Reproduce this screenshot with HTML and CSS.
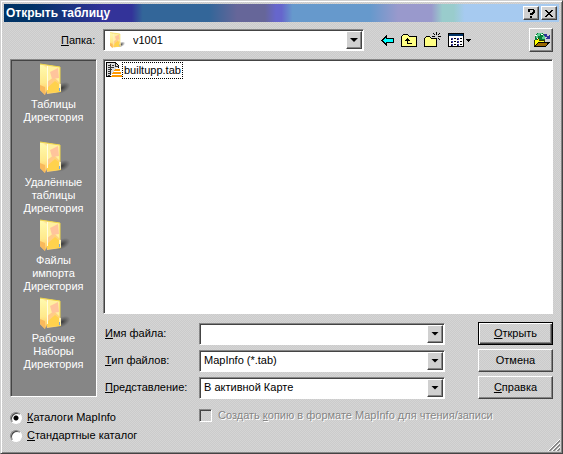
FILE: index.html
```html
<!DOCTYPE html>
<html lang="ru">
<head>
<meta charset="utf-8">
<title>Открыть таблицу</title>
<link rel="stylesheet" href="styles.css">
</head>
<body>
<svg class="defs" aria-hidden="true">
  <defs>
    <linearGradient id="paper" x1="0" x2="1" y1="0" y2="1">
      <stop offset="0" stop-color="#fff3a6"/><stop offset="0.5" stop-color="#ffc98c"/><stop offset="1" stop-color="#ffe066"/>
    </linearGradient>
    <linearGradient id="flap" x1="0" x2="0" y1="0" y2="1">
      <stop offset="0" stop-color="#fffbb0"/><stop offset="0.6" stop-color="#ffe98c"/><stop offset="1" stop-color="#ffbd5c"/>
    </linearGradient>
    <radialGradient id="shade"><stop offset="0" stop-color="#333" stop-opacity=".9"/><stop offset="1" stop-color="#444" stop-opacity="0"/></radialGradient>
    <symbol id="folder" viewBox="0 0 32 32">
      <ellipse cx="24" cy="25" rx="9" ry="5" transform="rotate(-28 24 25)" fill="url(#shade)"/>
      <path d="M3 1L22 4V20L23 21V29L9 31Z" fill="url(#paper)"/>
      <path d="M9 2L22 4V20L16 14L9 19Z" fill="#fff0a0"/>
      <path d="M12 9L20 5L21 15L14 16Z" fill="#ffc49c"/>
      <path d="M9 25L17 18L22 22V29L9 30Z" fill="#ffd24d"/>
      <path d="M2 1L9 5V27L7 32L2 27Z" fill="url(#flap)"/>
      <path d="M2 22L7 24V32L2 27Z" fill="#f9b95c"/>
      <path d="M9.500 3V27" stroke="#fffde0" fill="none"/>
      <path d="M2 1L22 4V20" stroke="#efd548" fill="none"/>
      <path d="M21 21H23V28H21Z" fill="#fff2b8"/><path d="M21 25H22V28H21Z" fill="#78aadd"/>
    </symbol>
  </defs>
</svg>
<main class="dialog">
  <header class="titlebar">
    <h1>Открыть таблицу</h1>
    <button class="raised" aria-label="Помощь"><svg width="8" height="9" shape-rendering="crispEdges"><path d="M1 0H7V1H8V4H7V5H6V6H3V4H5V3H6V1H3V3H1ZM3 7H5V9H3Z"/></svg></button>
    <button class="raised" aria-label="Закрыть"><svg width="8" height="7" shape-rendering="crispEdges"><path d="M0 0H2V1H3V2H5V1H6V0H8V1H7V2H6V3H5V4H6V5H7V6H8V7H6V6H5V5H3V6H2V7H0V6H1V5H2V4H3V3H2V2H1V1H0Z"/></svg></button>
  </header>

  <div class="toolbar">
    <label for="look"><u>П</u>апка:</label>
    <div class="combo lookin">
      <select id="look"><option>v1001</option></select>
      <svg class="combo-icon" width="16" height="16"><use href="#folder"/></svg>
      <span class="arrow raised"></span>
    </div>
    <div class="tools">
      <button aria-label="Назад"><svg width="13" height="11" shape-rendering="crispEdges"><path d="M1 5.5L5.5 1V3.5H12.5V7.5H5.5V10Z" fill="#0ff" stroke="#000"/></svg></button>
      <button aria-label="На уровень вверх"><svg width="16" height="15" shape-rendering="crispEdges"><path d="M.5 13.500V3.500L2.500 1.500H6.500L8.500 3.500H15.500V13.500Z" fill="#ffff84" stroke="#000"/><path d="M6 5H7V6H8V7H9V8H7V10H11V11H6V8H4V7H5V6H6Z"/></svg></button>
      <button aria-label="Новая папка"><svg width="17" height="16" shape-rendering="crispEdges"><path d="M.5 14.500V6.500L2.500 4.500H5.500L7.500 6.500H12.500V14.500Z" fill="#ffff84" stroke="#000"/><path d="M12 0h1v3h-1zM12 6h1v3h-1zM8 4h3v1h-3zM14 4h3v1h-3zM9 1h1v1h-1zM10 2h1v1h-1zM14 2h1v1h-1zM15 1h1v1h-1zM10 6h1v1h-1zM14 6h1v1h-1zM15 7h1v1h-1z"/></svg></button>
      <button aria-label="Вид"><svg width="24" height="15" shape-rendering="crispEdges"><path d="M.5 .5H15.500V13.500H.5Z" fill="#fff" stroke="#000"/><path d="M1 1H15V3H1Z" fill="#036"/><path d="M3 5h2v2h-2zM3 8h2v2h-2zM3 11h2v2h-2zM9 5h2v2h-2zM9 8h2v2h-2zM9 11h2v2h-2z" fill="#339"/><path d="M3 6h1v1h-1zM3 9h1v1h-1zM3 12h1v1h-1zM9 6h1v1h-1zM9 9h1v1h-1zM9 12h1v1h-1zM6 5h2v1h-2zM6 8h2v1h-2zM6 11h2v1h-2zM12 5h2v1h-2zM12 8h2v1h-2zM12 11h2v1h-2zM18 6h5v1h-1v1h-1v1h-1v-1h-1v-1h-1z"/></svg></button>
    </div>
    <button class="raised globe" aria-label="Каталог"><svg width="17" height="16" shape-rendering="crispEdges"><circle cx="7" cy="6" r="5.500" fill="#087b38"/><path d="M5 1H9V2H7V4H5V6H3V3ZM10 3H12V7H9V5H10Z" fill="#60ce94"/><path d="M2 3h2v1h-2zM4 6h2v2h-2zM8 2h2v1h-2z" fill="#fff"/><path d="M11 3V2H14V4H16V3H17V7H13V6H14V5H12V4H11Z" fill="#339"/><path d="M1.500 14.500V8.500H3.500L5.500 6.500V8.500H11.500V10.500" fill="#ff3" stroke="#330"/><path d="M1.500 14.500L5.500 10.500H16L12.500 14.500Z" fill="#996600" stroke="#000"/><path d="M2 13V8H4L6 7V9H8V10H5Z" fill="#ff0"/></svg></button>
  </div>

  <div class="content">
    <aside class="side">
      <nav class="places sunken">
        <a href="#"><svg width="32" height="32"><use href="#folder"/></svg>Таблицы<br>Директория</a>
        <a href="#"><svg width="32" height="32"><use href="#folder"/></svg>Удалённые<br>таблицы<br>Директория</a>
        <a href="#"><svg width="32" height="32"><use href="#folder"/></svg>Файлы<br>импорта<br>Директория</a>
        <a href="#"><svg width="32" height="32"><use href="#folder"/></svg>Рабочие<br>Наборы<br>Директория</a>
      </nav>
      <div class="choices">
        <label><input type="radio" name="dirs" checked><span><u>К</u>аталоги MapInfo</span></label>
        <label><input type="radio" name="dirs"><span><u>С</u>тандартные каталог</span></label>
      </div>
    </aside>

    <section class="work">
      <div class="files sunken">
        <a class="file" href="#"><svg width="16" height="16" shape-rendering="crispEdges"><path d="M.5 .5H9.500L12.500 3.500V14.500H.5Z" fill="#ddd" stroke="#000"/><path d="M9 1V4H13M2 3H5M6 3H8M2 5H4M5 5H8M2 7H6M2 9H4M2 11H5M2 13H4M4.500 2V13" fill="none" stroke="#333"/><path d="M10 6H13V7H14V9H15V15H5V12H7V10H8V8H10Z" fill="#fff"/><path d="M9 7H14V9H8V8H9ZM7 10H15V12H6V11H7ZM6 13H16V15H5V14H6Z" fill="#f90"/></svg><span>builtupp.tab</span></a>
      </div>
      <form class="form" onsubmit="return false">
        <label for="name"><u>И</u>мя файла:</label>
        <div class="combo"><input id="name" type="text"><button type="button" class="arrow raised" aria-label="Список"></button></div>
        <button class="push default"><u>О</u>ткрыть</button>

        <label for="type"><u>Т</u>ип файлов:</label>
        <div class="combo"><select id="type"><option>MapInfo (*.tab)</option></select><span class="arrow raised"></span></div>
        <button class="push">Отмена</button>

        <label for="view"><u>П</u>редставление:</label>
        <div class="combo"><select id="view"><option>В активной Карте</option></select><span class="arrow raised"></span></div>
        <button class="push"><u>С</u>правка</button>

        <label class="copy"><input type="checkbox" disabled><span>Создать <u>к</u>опию в формате MapInfo для чтения/записи</span></label>
      </form>
    </section>
  </div>
  <svg class="grip" width="13" height="13"><path d="M1 13L13 1M5 13L13 5M9 13L13 9" stroke="#fff"/><path d="M2 13L13 2M3 13L13 3M6 13L13 6M7 13L13 7M10 13L13 10M11 13L13 11" stroke="#888"/></svg>
</main>
</body>
</html>
```
FILE: styles.css
```css
* { box-sizing: border-box; }

:root {
  --face: #d0d0d0;
  --dither: repeating-conic-gradient(#cbcbcb 0 25%, #d5d5d5 0 50%) 0 0 / 2px 2px;
}

body {
  margin: 0;
  font: 11px/13px "Liberation Sans", Arial, sans-serif;
  color: #000;
}

.defs { position: absolute; width: 0; height: 0; }

button, input, select { font: inherit; color: inherit; margin: 0; }
button { padding: 0; border: 0; background: none; }
a { color: inherit; text-decoration: none; }
svg { display: block; flex: none; }

.dialog {
  position: relative;
  min-height: 100vh;
  display: flex;
  flex-direction: column;
  padding: 2px;
  background: var(--dither);
  border: 1px solid;
  border-color: #d0d0d0 #444 #444 #d0d0d0;
  box-shadow: inset 1px 1px #fff, inset -1px -1px #868686;
}

.raised {
  background: var(--face);
  border: 1px solid;
  border-color: #fff #444 #444 #fff;
  box-shadow: inset -1px -1px #868686;
}

.sunken {
  border: 1px solid;
  border-color: #868686 #fff #fff #868686;
  box-shadow: inset 1px 1px #444;
}

.titlebar {
  height: 18px;
  margin: 1px;
  padding: 0 2px;
  display: flex;
  align-items: center;
  gap: 2px;
  background: linear-gradient(90deg,
    #036 5%, #339 18%, #339 23%, #369 25%, #369 37%,
    #669 42%, #669 47%, #66c 49%, #66c 50%, #69c 52%, #69c 66%,
    #99c 71%, #99c 77%, #9cc 79%, #9cc 81%, #a6caf0 83%);
}
.titlebar h1 { flex: 1; margin: 0; font-size: 12px; line-height: 18px; color: #fff; }
.titlebar button { width: 16px; height: 14px; display: grid; place-items: center; }

.toolbar {
  display: flex;
  align-items: center;
  padding: 5px 7px 7px 58px;
}
.toolbar > label { width: 42px; }

.combo {
  position: relative;
  display: flex;
  height: 22px;
  padding: 2px;
  background: #fff;
  border: 1px solid;
  border-color: #868686 #fff #fff #868686;
  box-shadow: inset 1px 1px #444;
}
.combo select, .combo input {
  appearance: none;
  flex: 1;
  min-width: 0;
  padding: 0 18px 0 2px;
  border: 0;
  border-radius: 0;
  outline: 0;
  background: transparent;
}
.combo .arrow {
  position: absolute;
  top: 1px;
  right: 1px;
  bottom: 1px;
  width: 16px;
  display: grid;
  place-items: center;
  pointer-events: none;
}
.arrow::after {
  content: "";
  width: 8px;
  height: 4px;
  background: #000;
  clip-path: polygon(0 0, 100% 0, 50% 100%);
}
.lookin { flex: 1; }
.lookin select { padding-left: 27px; }
.combo-icon { position: absolute; left: 5px; top: 2px; }

.tools { display: flex; align-items: center; gap: 7px; margin: 0 57px 0 17px; }
.globe { width: 24px; height: 24px; display: grid; place-items: center; }

.content { flex: 1; display: flex; gap: 6px; padding: 0 7px; }
.side { width: 87px; display: flex; flex-direction: column; }
.places {
  flex: 1;
  padding: 3px 0 12px;
  background: #868686;
  color: #fff;
  text-align: center;
}
.places a { display: block; height: 78px; }
.places svg { margin: 0 auto 3px; }

.choices { padding: 14px 0 9px; display: grid; gap: 5px; }
.choices label { display: flex; align-items: center; gap: 5px; white-space: nowrap; }
.choices input {
  appearance: none;
  flex: none;
  width: 12px;
  height: 12px;
  border: 1px solid;
  border-color: #868686 #fff #fff #868686;
  border-radius: 50%;
  background: #fff;
  box-shadow: inset 1px 1px #444;
}
.choices input:checked { background: radial-gradient(circle, #000 2px, #fff 3px); }

.work { flex: 1; min-width: 0; display: flex; flex-direction: column; }
.files { flex: 1; padding: 2px; background: #fff; }
.file { display: inline-flex; }
.file span { height: 17px; line-height: 15px; padding: 0 1px; border: 1px dotted #000; }

.form {
  display: grid;
  grid-template-columns: 94px 1fr 75px;
  grid-template-rows: 23px 23px 23px 18px;
  row-gap: 4px;
  align-items: center;
  padding: 8px 0 30px 2px;
}
.form .combo { margin-right: 33px; }
.push {
  height: 23px;
  background: var(--dither);
  border: 1px solid;
  border-color: #fff #444 #444 #fff;
  box-shadow: inset -1px -1px #868686;
}
.push.default { border-color: #000; box-shadow: inset 1px 1px #fff, inset -1px -1px #444, inset -2px -2px #868686; }

.copy {
  grid-column: 2 / 4;
  display: flex;
  align-items: center;
  gap: 6px;
  margin-top: 6px;
  white-space: nowrap;
  color: #868686;
  text-shadow: 1px 1px #fff;
}
.copy input {
  appearance: none;
  width: 13px;
  height: 13px;
  border: 1px solid;
  border-color: #868686 #fff #fff #868686;
  box-shadow: inset 1px 1px #444;
  background: var(--dither);
}

.grip { position: absolute; right: 2px; bottom: 2px; }
```
